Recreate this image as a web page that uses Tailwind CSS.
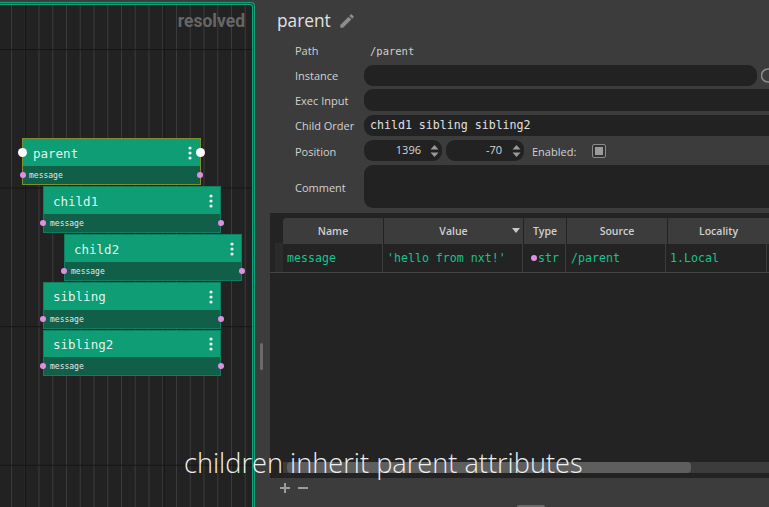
<!DOCTYPE html>
<html><head><meta charset="utf-8"><script src="https://cdn.jsdelivr.net/npm/@tailwindcss/browser@4"></script></head>
<body class="bg-[#3c3c3c]">
<div class="relative flex h-[507px] w-[769px] overflow-hidden bg-[#3c3c3c] font-['Open_Sans',sans-serif] text-[#d8d8d8]">
  <!-- graph -->
  <div class="h-full w-[256px] shrink-0 pt-[2px] pr-[1px]">
    <div class="h-full rounded-tr-[4px] border-t border-r border-[#12a37a] pt-[1px] pr-[1px]">
      <div class="h-full rounded-tr-[3px] border-t border-r border-[#12a37a] bg-[#222222]">
        <div class="relative h-full overflow-hidden bg-[linear-gradient(to_bottom,#151515_1px,transparent_1px),linear-gradient(to_right,#151515_1px,transparent_1px),linear-gradient(to_right,#3b3b3b_1px,transparent_1px)] bg-[size:138.6px_138.6px,138.6px_138.6px,13.76px_13.76px] bg-[position:0_44px,25px_0,11px_0]">
          <div class="absolute top-[6px] right-[7px] font-['Roboto',sans-serif] text-[17.5px] leading-[20px] font-bold text-[#666666]">resolved</div>

          <div class="absolute top-[133px] left-[22px] h-[47px] w-[179px] border border-[#7d8f2e] bg-[#0f9d75] font-['DejaVu_Sans_Mono',monospace]">
            <div class="flex h-[27px] items-center justify-between pr-[8px] pl-[10px] text-[12.5px] text-[#dff5ee]"><span class="mt-[4px]">parent</span>
              <svg width="4" height="14" viewBox="0 0 4 14" fill="#eeeeee"><circle cx="2" cy="2" r="1.6"/><circle cx="2" cy="7" r="1.6"/><circle cx="2" cy="12" r="1.6"/></svg></div>
            <div class="flex h-[18px] items-center bg-[#115f49] pt-[2px] pl-[6px] text-[8px] text-[#e6e6e6]">message</div>
            <span class="absolute top-[9px] left-[-5px] size-[9px] rounded-full bg-white"></span>
            <span class="absolute top-[9px] right-[-5px] size-[9px] rounded-full bg-white"></span>
            <span class="absolute top-[33px] left-[-3px] size-[6px] rounded-full bg-[#e08fe0]"></span>
            <span class="absolute top-[33px] right-[-3px] size-[6px] rounded-full bg-[#e08fe0]"></span>
          </div>

          <div class="absolute top-[181px] left-[43px] h-[47px] w-[178px] border border-[#0e7d60] bg-[#0f9d75] font-['DejaVu_Sans_Mono',monospace]">
            <div class="flex h-[27px] items-center justify-between pr-[7px] pl-[9px] text-[12.5px] text-[#dff5ee]"><span class="mt-[4px]">child1</span>
              <svg width="4" height="14" viewBox="0 0 4 14" fill="#eeeeee"><circle cx="2" cy="2" r="1.6"/><circle cx="2" cy="7" r="1.6"/><circle cx="2" cy="12" r="1.6"/></svg></div>
            <div class="flex h-[18px] items-center bg-[#115f49] pt-[2px] pl-[6px] text-[8px] text-[#e6e6e6]">message</div>
            <span class="absolute top-[33px] left-[-4px] size-[6px] rounded-full bg-[#e08fe0]"></span>
            <span class="absolute top-[33px] right-[-4px] size-[6px] rounded-full bg-[#e08fe0]"></span>
          </div>

          <div class="absolute top-[229px] left-[64px] h-[47px] w-[178px] border border-[#0e7d60] bg-[#0f9d75] font-['DejaVu_Sans_Mono',monospace]">
            <div class="flex h-[27px] items-center justify-between pr-[7px] pl-[9px] text-[12.5px] text-[#dff5ee]"><span class="mt-[4px]">child2</span>
              <svg width="4" height="14" viewBox="0 0 4 14" fill="#eeeeee"><circle cx="2" cy="2" r="1.6"/><circle cx="2" cy="7" r="1.6"/><circle cx="2" cy="12" r="1.6"/></svg></div>
            <div class="flex h-[18px] items-center bg-[#115f49] pt-[2px] pl-[6px] text-[8px] text-[#e6e6e6]">message</div>
            <span class="absolute top-[33px] left-[-4px] size-[6px] rounded-full bg-[#e08fe0]"></span>
            <span class="absolute top-[33px] right-[-4px] size-[6px] rounded-full bg-[#e08fe0]"></span>
          </div>

          <div class="absolute top-[277px] left-[43px] h-[47px] w-[178px] border border-[#0e7d60] bg-[#0f9d75] font-['DejaVu_Sans_Mono',monospace]">
            <div class="flex h-[27px] items-center justify-between pr-[7px] pl-[9px] text-[12.5px] text-[#dff5ee]"><span class="mt-[2px]">sibling</span>
              <svg width="4" height="14" viewBox="0 0 4 14" fill="#eeeeee"><circle cx="2" cy="2" r="1.6"/><circle cx="2" cy="7" r="1.6"/><circle cx="2" cy="12" r="1.6"/></svg></div>
            <div class="flex h-[18px] items-center bg-[#115f49] pt-[2px] pl-[6px] text-[8px] text-[#e6e6e6]">message</div>
            <span class="absolute top-[33px] left-[-4px] size-[6px] rounded-full bg-[#e08fe0]"></span>
            <span class="absolute top-[33px] right-[-4px] size-[6px] rounded-full bg-[#e08fe0]"></span>
          </div>

          <div class="absolute top-[325px] left-[43px] h-[46px] w-[178px] border border-[#0e7d60] bg-[#0f9d75] font-['DejaVu_Sans_Mono',monospace]">
            <div class="flex h-[26px] items-center justify-between pr-[7px] pl-[9px] text-[12.5px] text-[#dff5ee]"><span class="mt-[2px]">sibling2</span>
              <svg width="4" height="14" viewBox="0 0 4 14" fill="#eeeeee"><circle cx="2" cy="2" r="1.6"/><circle cx="2" cy="7" r="1.6"/><circle cx="2" cy="12" r="1.6"/></svg></div>
            <div class="flex h-[18px] items-center bg-[#115f49] pt-[2px] pl-[6px] text-[8px] text-[#e6e6e6]">message</div>
            <span class="absolute top-[32px] left-[-4px] size-[6px] rounded-full bg-[#e08fe0]"></span>
            <span class="absolute top-[32px] right-[-4px] size-[6px] rounded-full bg-[#e08fe0]"></span>
          </div>
        </div>
      </div>
    </div>
  </div>

  <!-- splitter gutter -->
  <div class="w-[14px] shrink-0"></div>

  <!-- right -->
  <div class="flex min-w-0 flex-1 flex-col">
    <div class="flex h-[42px] items-center gap-[7px] pl-[7px]">
      <span class="text-[17.3px] leading-[24px] text-[#e2e2e2]">parent</span>
      <svg width="18" height="18" viewBox="0 0 24 24" fill="#8c8c8c"><path d="M3 17.25V21h3.75L17.81 9.94l-3.75-3.75L3 17.25zM20.71 7.04a1 1 0 0 0 0-1.41l-2.34-2.34a1 1 0 0 0-1.41 0l-1.83 1.83 3.75 3.75 1.83-1.83z"/></svg>
    </div>
    <div class="grid grid-cols-[69px_1fr] items-start pl-[25px] text-[11px] text-[#d2d2d2]">
      <div class="h-[23px] leading-[18px]">Path</div>
      <div class="h-[23px] pl-[6px] font-['DejaVu_Sans_Mono',monospace] text-[10.5px] leading-[18px] text-[#cfcfcf]">/parent</div>
      <div class="leading-[21px]">Instance</div>
      <div class="flex h-[24px] items-start gap-[4px]"><div class="h-[21px] w-[393px] rounded-[9px] bg-[#222222]"></div><svg class="shrink-0" width="12" height="21" viewBox="0 0 12 21" fill="none" stroke="#8e8e8e" stroke-width="1.5"><circle cx="7" cy="10.5" r="6.5"/></svg></div>
      <div class="leading-[24px]">Exec Input</div>
      <div class="h-[26px]"><div class="h-[22px] w-[420px] rounded-l-[9px] bg-[#222222]"></div></div>
      <div class="leading-[22px]">Child Order</div>
      <div class="h-[25px]"><div class="flex h-[21px] w-[420px] items-center rounded-l-[9px] bg-[#222222] pl-[6px] font-['DejaVu_Sans_Mono',monospace] text-[11.6px] text-[#e0e0e0]">child1 sibling sibling2</div></div>
      <div class="leading-[23px]">Position</div>
      <div class="flex h-[25px] items-start">
        <div class="flex h-[21px] w-[78px] items-center justify-end rounded-[9px] bg-[#222222] pr-[3px] text-[11px] text-[#d8d8d8]"><span>1396</span><svg class="ml-[9px]" width="9" height="14" viewBox="0 0 9 14" fill="#9a9a9a"><path d="M4.5 1 8.5 5.5H.5zM4.5 13 .5 8.5h8z"/></svg></div>
        <div class="ml-[4px] flex h-[21px] w-[78px] items-center justify-end rounded-[9px] bg-[#222222] pr-[3px] text-[11px] text-[#d8d8d8]"><span>-70</span><svg class="ml-[10px]" width="9" height="14" viewBox="0 0 9 14" fill="#9a9a9a"><path d="M4.5 1 8.5 5.5H.5zM4.5 13 .5 8.5h8z"/></svg></div>
        <span class="ml-[8px] leading-[23px]">Enabled:</span>
        <div class="mt-[4px] ml-[16px] flex size-[14px] items-center justify-center rounded-[2px] border border-[#8a8a8a] bg-[#333333]"><div class="size-[8px] bg-[#9a9a9a]"></div></div>
      </div>
      <div class="leading-[46px]">Comment</div>
      <div class="h-[48px]"><div class="h-[43px] w-[420px] rounded-l-[9px] bg-[#222222]"></div></div>
    </div>
    <!-- table panel -->
    <div class="flex h-[265px] flex-col bg-[#232323]">
      <div class="grid h-[30px] grid-cols-[100px_139px_42px_100px_101px_10px] gap-x-[1px] pt-[5px] pl-[13px] text-center text-[10.5px] leading-[26px] font-semibold text-[#d0d0d0]">
        <div class="rounded-tl-[3px] bg-[#3c3c3c]">Name</div>
        <div class="relative bg-[#3c3c3c]">Value<svg class="absolute top-[10px] right-[3px]" width="8" height="5" viewBox="0 0 8 5" fill="#c8c8c8"><path d="M0 0h8L4 5z"/></svg></div>
        <div class="bg-[#3c3c3c]">Type</div>
        <div class="bg-[#3c3c3c]">Source</div>
        <div class="bg-[#3c3c3c]">Locality</div>
        <div class="bg-[#3c3c3c]"></div>
      </div>
      <div class="flex h-[30px] border-b border-[#454545]">
        <div class="ml-[5px] w-[8px] shrink-0 bg-[#2b2b2b]"></div>
        <div class="flex font-['DejaVu_Sans_Mono',monospace] text-[11.6px] leading-[30px] text-[#12c48f]">
          <div class="w-[100px] border-r border-[#3c3c3c] pl-[4px]">message</div>
          <div class="w-[140px] border-r border-[#3c3c3c] pl-[4px]">'hello from nxt!'</div>
          <div class="flex w-[43px] items-center border-r border-[#3c3c3c] pl-[8px]"><span class="mr-[1px] size-[6px] shrink-0 rounded-full bg-[#e08fe0]"></span>str</div>
          <div class="w-[100px] border-r border-[#3c3c3c] pl-[5px]">/parent</div>
          <div class="w-[101px] border-r border-[#3c3c3c] pl-[4px]">1.Local</div>
        </div>
      </div>
      <div class="flex-1"></div>
      <div class="mb-[5px] ml-[13px] h-[11px] bg-[#3c3c3c]"><div class="ml-[4px] h-full w-[404px] rounded-[4px] bg-[#5e5e5e]"></div></div>
    </div>
    <div class="flex h-[19px] items-center gap-[4px] pl-[8px] text-[#9c9c9c]">
      <svg width="14" height="14" viewBox="0 0 14 14" stroke="#9c9c9c" stroke-width="2"><path d="M2 7h10M7 2v10"/></svg>
      <svg width="14" height="14" viewBox="0 0 14 14" stroke="#9c9c9c" stroke-width="2"><path d="M2 7h10"/></svg>
    </div>
  </div>

  <div class="absolute top-[343px] left-[260px] h-[27px] w-[3px] rounded-[2px] bg-[#6b6b6b]"></div>
  <div class="absolute bottom-0 left-[517px] h-[2px] w-[28px] rounded-t-[2px] bg-[#6b6b6b]"></div>
  <div class="absolute top-[446px] left-[184px] font-['Open_Sans',sans-serif] text-[27.2px] leading-[34px] font-light whitespace-nowrap text-[#f0f0f0]">children inherit parent attributes</div>
</div>
</body></html>
